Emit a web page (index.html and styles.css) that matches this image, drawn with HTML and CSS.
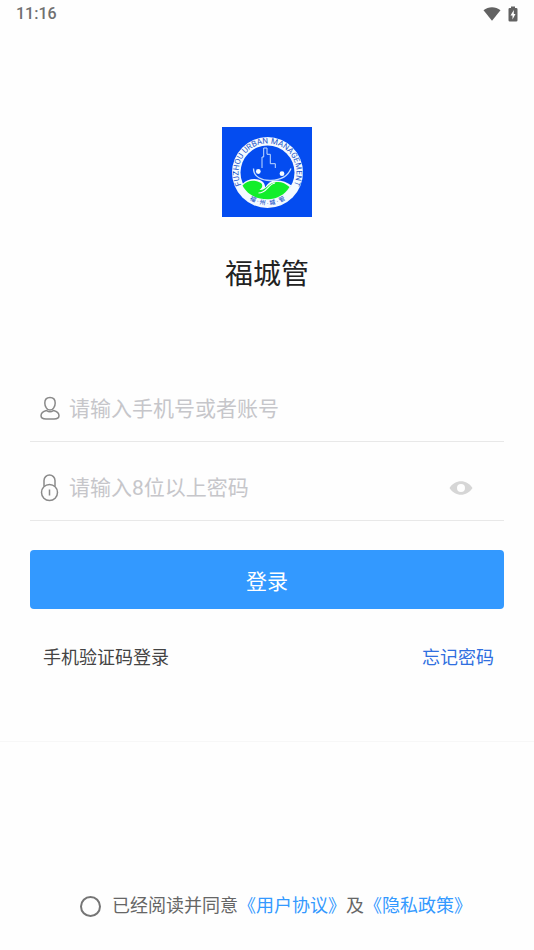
FILE: index.html
```html
<!DOCTYPE html>
<html lang="zh-CN">
<head>
<meta charset="utf-8">
<meta name="viewport" content="width=device-width, initial-scale=1">
<title>福城管</title>
<link rel="stylesheet" href="styles.css">
</head>
<body>
<div class="screen">
  <header class="status-bar">
    <time>11:16</time>
    <div class="status-icons">
      <svg class="wifi" viewBox="0 0 18 14" aria-hidden="true"><path d="M0.5 3.2C5.4-.7 12.6-.7 17.5 3.2L9 13.8Z"/></svg>
      <svg class="battery" viewBox="0 0 10 16" aria-hidden="true"><path fill-rule="evenodd" d="M3 .5h4V2h1.200Q9.500 2 9.500 3.200v11q0 1.300-1.300 1.300H1.800Q.5 15.500 .5 14.200v-11Q.5 2 1.800 2H3ZM5.800 4 2.500 9.500h2V13.500L7.500 8h-1.700Z"/></svg>
    </div>
  </header>

  <main class="content">
    <svg class="logo" viewBox="0 0 90 90" role="img" aria-label="Fuzhou Urban Management">
      <defs>
        <path id="arc-top" d="M20.400 60A29 29 0 1 1 70.600 60"/>
        <path id="arc-bottom" d="M16 58.900A32.400 32.400 0 0 0 75 58.900"/>
      </defs>
      <rect width="90" height="90" fill="#044cf0"/>
      <circle cx="45.500" cy="45.500" r="35.500" fill="#f4faff"/>
      <circle cx="45.500" cy="45.500" r="27" fill="#044cf0"/>
      <text class="logo-name"><textPath href="#arc-top" startOffset="50%">FUZHOU URBAN MANAGEMENT</textPath></text>
      <path d="M20.500 57C26 50.500 37 51 41 55C43 57 42.500 58.500 43.500 60.500C45 57 48 54 53 53.500C59 53 65 55 69.500 58.500C64 68 56 73 45.500 73S26 68 20.500 57Z" fill="#f4faff"/>
      <path d="M20.500 58.500C25 52.500 34 52.500 39 56C41.500 58.500 40 61 37.500 63C43 64 46 56.500 52.500 55.500C58 54 63 56 67.500 60C63 68 54 72.200 46 72.200C35 72.500 25 67.500 20.500 58.500Z" fill="#12ee2b"/>
      <path d="M36.500 66C45 66 46 57 53 56" fill="none" stroke="#f4faff" stroke-width="1.200"/>
      <g fill="none" stroke="#c4dcff" stroke-width="1">
        <path d="M40 41V30h1.700v-9H45v6.300h3.300v9.400h5V41"/>
        <path d="M31.500 41.500C31.500 50 40 53.800 49 53.500C59 53 66 49 69 41.500" stroke-width="1.300"/>
      </g>
      <circle cx="36.300" cy="44.500" r="2.400" fill="#f4faff"/>
      <circle cx="60" cy="46.700" r="2.400" fill="#f4faff"/>
      <text class="logo-city"><textPath href="#arc-bottom" startOffset="50%">福 · 州 · 城 · 管</textPath></text>
    </svg>
    <h1 class="title">福城管</h1>

    <form class="login">
      <div class="field">
        <label for="account" aria-label="手机号或者账号">
          <svg class="field-icon" viewBox="0 0 20 28" aria-hidden="true"><path d="M10 2.500C6.500 2.500 4.800 4.800 4.800 8C4.800 11.500 7 15 10 15S15.200 11.500 15.200 8C15.200 4.800 13.500 2.500 10 2.500ZM6.500 15.500C3 16.500 1 18.500 1 20.800C1 23 3 24 6 24H14C17 24 19 23 19 20.800C19 18.500 17 16.500 13.500 15.500Q10 18.200 6.500 15.500Z"/></svg>
        </label>
        <input id="account" type="text" placeholder="请输入手机号或者账号">
      </div>
      <div class="field">
        <label for="password" aria-label="密码">
          <svg class="field-icon" viewBox="0 0 20 28" aria-hidden="true"><path d="M4 12V6.500A5.500 5.500 0 0 1 15 6.500V12M9.500 15.500V21.500"/><circle cx="9.500" cy="18.500" r="8"/></svg>
        </label>
        <input id="password" type="password" placeholder="请输入8位以上密码">
        <button class="reveal" type="button" aria-label="显示密码">
          <svg viewBox="0 0 24 16" aria-hidden="true"><path fill-rule="evenodd" d="M.5 8C6-1 18-1 23.500 8C18 17 6 17 .5 8ZM12 4a4 4 0 1 0 0 8a4 4 0 1 0 0-8Z"/></svg>
        </button>
      </div>
      <button class="submit" type="submit">登录</button>
      <nav class="options">
        <a class="sms" href="#sms">手机验证码登录</a>
        <a class="forgot" href="#forgot">忘记密码</a>
      </nav>
    </form>
  </main>

  <footer class="agreement">
    <input id="agree" type="checkbox">
    <label for="agree">已经阅读并同意<a href="#terms">《用户协议》</a>及<a href="#privacy">《隐私政策》</a></label>
  </footer>
</div>
</body>
</html>
```
FILE: styles.css
```css
* {
  box-sizing: border-box;
}

body {
  margin: 0;
  background: #fefefe;
  color: #444;
  font-family: Roboto, "Noto Sans CJK SC", sans-serif;
  font-size: 18px;
  line-height: 28px;
}

a {
  text-decoration: none;
}

button,
input {
  margin: 0;
  padding: 0;
  border: 0;
  background: none;
  font-family: inherit;
}

svg {
  display: block;
}

.screen {
  display: flex;
  flex-direction: column;
  min-height: 100vh;
}

.status-bar {
  display: flex;
  justify-content: space-between;
  align-items: center;
  padding: 0 16px;
  color: #707070;
  font-size: 16px;
  font-weight: 500;
}

.status-icons {
  display: flex;
  align-items: center;
  gap: 7px;
  height: 26px;
  fill: #626262;
}

.wifi {
  width: 18px;
  height: 14px;
}

.battery {
  width: 10px;
  height: 16px;
}

.content {
  display: flex;
  flex-direction: column;
  align-items: center;
  padding-top: 99px;
  border-bottom: 1px solid #f7f7f7;
}

.logo {
  width: 90px;
  height: 90px;
}

.logo-name,
.logo-city {
  fill: #1c55c8;
  text-anchor: middle;
}

.logo-name {
  font-size: 8px;
}

.logo-city {
  font-size: 6px;
  font-weight: 500;
}

.title {
  margin: 38px 0 68px;
  color: #222;
  font-size: 28px;
  font-weight: 400;
  line-height: 40px;
}

.login {
  align-self: stretch;
  padding: 0 30px 69px;
}

.field {
  display: flex;
  align-items: center;
  padding: 26px 31px 12px 10px;
  border-bottom: 1px solid #e8e8e8;
}

.field-icon {
  width: 20px;
  height: 28px;
  fill: none;
  stroke: #8a8a8a;
  stroke-width: 1.5;
}

.field input {
  flex: 1;
  min-width: 0;
  height: 40px;
  margin-left: 9px;
  color: #333;
  font-size: 21px;
  outline: none;
}

.field input::placeholder {
  color: #c6c6ca;
  opacity: 1;
}

.reveal svg {
  width: 24px;
  height: 16px;
  fill: #d6d6d6;
}

.submit {
  display: block;
  width: 100%;
  height: 59px;
  margin: 29px 0 35px;
  border-radius: 4px;
  background: #3399ff;
  color: #fff;
  font-size: 21px;
}

.options {
  display: flex;
  justify-content: space-between;
  padding: 0 10px 0 13px;
}

.sms {
  color: #444;
}

.forgot {
  color: #2f6fe0;
}

.agreement {
  display: flex;
  align-items: center;
  gap: 11px;
  margin-top: auto;
  padding: 0 40px 30px 80px;
  color: #666;
}

.agreement input {
  flex: none;
  width: 21px;
  height: 21px;
  border: 2px solid #757575;
  border-radius: 50%;
  appearance: none;
}

.agreement input:checked {
  background: #3399ff;
}

.agreement a {
  color: #3399ff;
}
```
